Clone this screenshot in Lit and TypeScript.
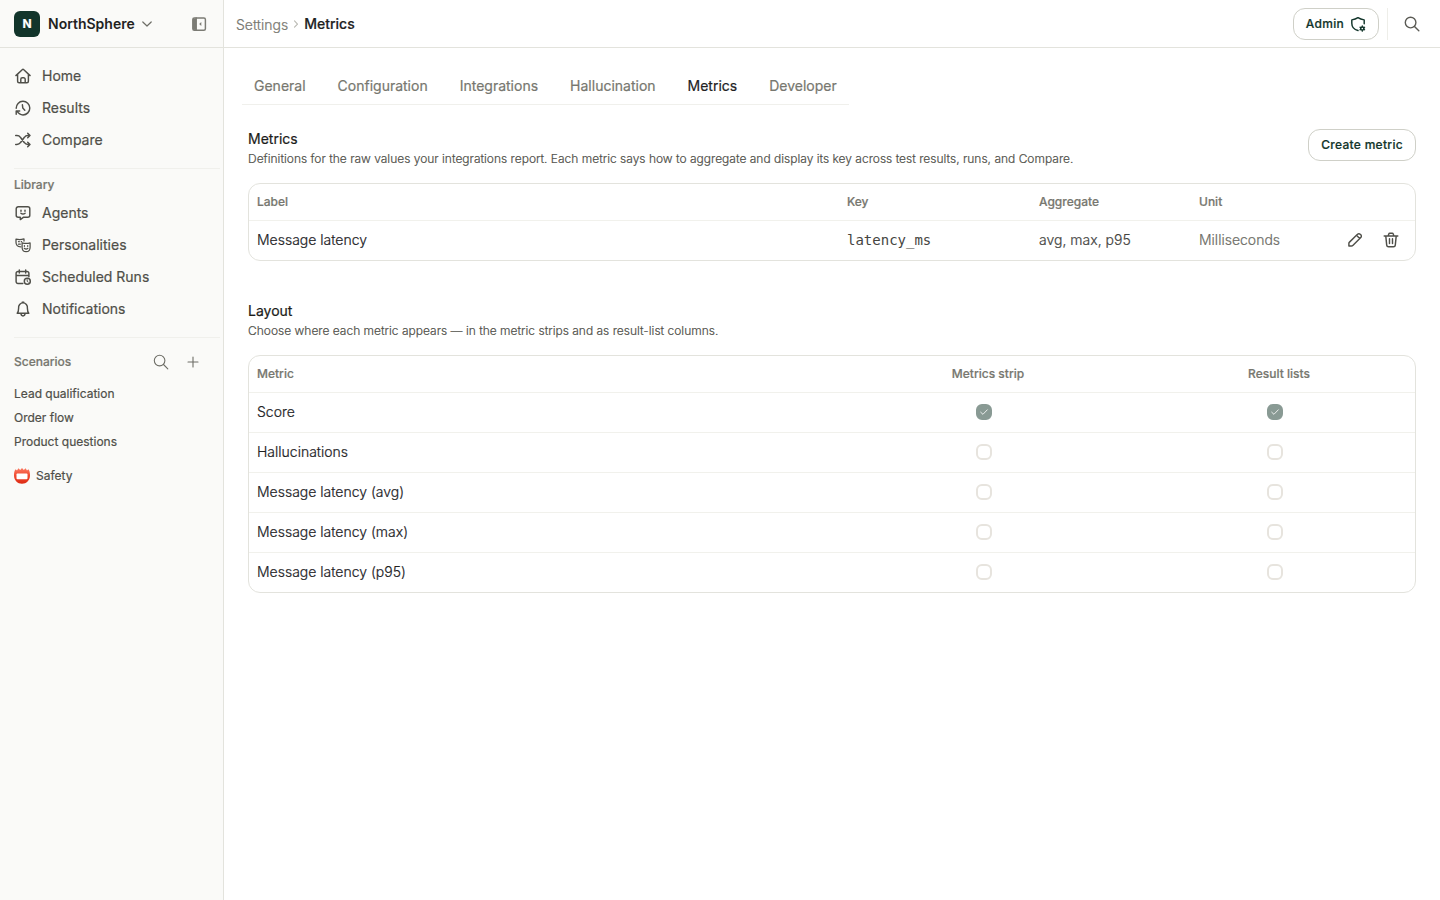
import { LitElement, html, css, svg } from "lit";
import { customElement, property } from "lit/decorators.js";

const ICONS: Record<string, unknown> = {
  home: svg`<path d="M.9 7.6 7.2 1.7a1.2 1.2 0 0 1 1.6 0L15.1 7.6M2.6 6.3v7a1.5 1.5 0 0 0 1.5 1.5h7.8a1.5 1.5 0 0 0 1.5-1.5v-7M5.8 14.6v-3.4a1.5 1.5 0 0 1 1.5-1.5h1.4a1.5 1.5 0 0 1 1.5 1.5v3.4"/>`,
  history: svg`<path d="M1.2 8.300A6.800 6.800 0 1 1 8 14.900c-2.500 0-4.500-1.300-6-3.700M1.200 14.300V11H4.700M7.400 4.800l.4 3.300 2 2.100"/>`,
  shuffle: svg`<path d="M.7 12.500h1.200c1.500 0 2.700-.6 3.500-1.800l4-5.400c.8-1.200 2-1.800 3.500-1.800H15M.7 3.500h1.200c1.500 0 2.700.6 3.500 1.800l4 5.400c.8 1.200 2 1.800 3.500 1.800H15M12.700 1.200 15 3.500l-2.300 2.300M12.700 10.200 15 12.500l-2.300 2.300"/>`,
  agent: svg`<path d="M3.200 1.800h9.600a2 2 0 0 1 2 2v6.500a2 2 0 0 1-2 2H8.300L5.300 14.600v-2.300H3.200a2 2 0 0 1-2-2V3.800a2 2 0 0 1 2-2ZM5.900 8.200q2.100 1.700 4.200 0M6 5.300v.9M10 5.300v.9"/>`,
  masks: svg`<path d="M5.700 9.800C2.600 9.700 1 7.900 1 5.200V2.100q4 1 8-.2v2.200M3.500 4.700h.8M6.200 4.700h.4M3.500 7.200h1.800M7.100 5.900q4 1.100 8 0v4.300c0 2.500-1.500 4.500-4 4.500s-4-2-4-4.500ZM9.400 8.700v.6M12.700 8.700v.6M9.300 11.300q1.800 1.500 3.600 0" stroke-width="1.250"/>`,
  calendar: svg`<path d="M7.800 14.500H3a1.900 1.900 0 0 1-1.900-1.900V4.400A1.900 1.900 0 0 1 3 2.500h9a1.900 1.900 0 0 1 1.900 1.900v3.400M1.200 6.400h12.600M4.300 1v2.900M10.700 1v2.900"/><circle cx="12.300" cy="12.200" r="3"/><path d="M12.200 10.700v1.700l1 .7" stroke-width="1"/>`,
  bell: svg`<path d="M2.200 12.300q1.400-1.500 1.400-5A4.400 4.700 0 0 1 8 1.900a4.400 4.700 0 0 1 4.400 5.400q0 3.500 1.400 5ZM7.200 1.700V1.200h1.600v.5M6 12.600a2 2.300 0 0 0 4 0"/>`,
  search: svg`<circle cx="6.600" cy="6.600" r="5.300"/><path d="m10.500 10.500 4.300 4.300"/>`,
  plus: svg`<path d="M8 3v10M3 8h10"/>`,
  down: svg`<path d="m3.800 6 4.200 4L12.200 6"/>`,
  right: svg`<path d="m6 3.800 4 4.200-4 4.200"/>`,
  panel: svg`<rect x="1.800" y="1.900" width="12.600" height="12.400" rx="1.500"/><path d="M2 2.500h3.300v11.400H2Z" fill="currentColor" stroke="none"/><path d="M5.200 2v12"/><path d="M10.300 6v4L8.200 8Z" fill="currentColor" stroke="none"/>`,
  shield: svg`<path d="M8 14.500C4.200 13.500 1.800 10.600 1.800 7.200V3.900q3.700-.4 6.200-2.200 2.500 1.800 6.200 2.200v3.900"/><circle cx="12.300" cy="12.500" r="1.600" stroke-width="1.500"/><path d="M12.300 9.800v.8M12.300 14.400v.8M10 11.200l.7.400M13.900 13.400l.7.400M10 13.800l.7-.4M13.900 11.600l.7-.4" stroke-width="1.300"/>`,
  pencil: svg`<path d="m9.700 3.100.9-.9a1.800 1.800 0 0 1 2.550 0l.65.650a1.800 1.800 0 0 1 0 2.550l-8 8a1.900 1.900 0 0 1-1.300.6H1.900v-2.600a1.900 1.900 0 0 1 .6-1.300ZM9.500 3.300l3.200 3.200"/>`,
  trash: svg`<path d="M1.200 3.900h13.600M2.800 4.100l.9 9a1.800 1.800 0 0 0 1.800 1.600h5a1.800 1.800 0 0 0 1.800-1.600l.9-9M5.200 3.700l.6-1.800a1 1 0 0 1 1-.7h2.400a1 1 0 0 1 1 .7l.6 1.800M6.500 6.800v4.600M9.500 6.800v4.600"/>`,
  check: svg`<path d="m3.600 8.300 3 2.800 5.800-6"/>`,
};

@customElement("line-icon")
class LineIcon extends LitElement {
  @property() name = "";
  static styles = css`
    :host { display: block; width: 16px; height: 16px; flex: none; }
    svg { display: block; width: 100%; height: 100%; overflow: visible; fill: none; stroke: currentColor;
      stroke-width: var(--stroke, 1.45); stroke-linecap: round; stroke-linejoin: round; }
  `;
  render() {
    return html`<svg viewBox="0 0 16 16" aria-hidden="true">${ICONS[this.name]}</svg>`;
  }
}

const NAV = [["home", "Home"], ["history", "Results"], ["shuffle", "Compare"]];
const LIBRARY = [["agent", "Agents"], ["masks", "Personalities"], ["calendar", "Scheduled Runs"], ["bell", "Notifications"]];
const TABS = ["General", "Configuration", "Integrations", "Hallucination", "Metrics", "Developer"];
const LAYOUT: [string, boolean][] = [
  ["Score", true],
  ["Hallucinations", false],
  ["Message latency (avg)", false],
  ["Message latency (max)", false],
  ["Message latency (p95)", false],
];

@customElement("app-root")
class AppRoot extends LitElement {
  static styles = css`
    :host { display: grid; grid-template-columns: 224px 1fr; height: 100vh; overflow: hidden; background: #fff;
      font: 300 14px/20px Inter, sans-serif; color: #22221f; -webkit-text-stroke: 0.2px; }
    * { box-sizing: border-box; }
    h2, p { margin: 0; }
    button { font: inherit; color: inherit; background: none; border: 0; padding: 0; }
    .side { background: #fafaf8; border-right: 1px solid #e3e3dd; color: #4f4f49; }
    .brand { height: 48px; border-bottom: 1px solid #e3e3dd; display: flex; align-items: center; padding: 0 16px 0 14px; }
    .logo { width: 26px; height: 26px; border-radius: 6px; background: #12352b; color: #fff; display: grid; place-items: center;
      font-weight: 700; font-size: 12px; margin-right: 8px; }
    .name { font-weight: 600; color: #22221f; margin-right: 4px; -webkit-text-stroke: 0; }
    .name + line-icon { color: #6d6d66; --stroke: 1.2; }
    .brand .panel { margin-left: auto; color: #7b7b74; }
    .nav { padding: 12px 4px 0 14px; display: flex; flex-direction: column; }
    .item { height: 32px; display: flex; align-items: center; gap: 11px; padding-left: 1px; font-weight: 400; }
    .rule { height: 1px; background: #f0f0ec; margin: 12px 3px 0 14px; }
    .cap { font-size: 12px; line-height: 16px; font-weight: 500; color: #77776f; }
    .library { padding: 8px 14px 4px; }
    .library + .nav { padding-top: 0; }
    .scen { display: flex; align-items: center; height: 24px; margin-top: 12px; padding: 0 22px 0 14px; color: #6d6d66; }
    .scen .cap { flex: 1; }
    .scen line-icon { --stroke: 1.1; }
    .scen line-icon + line-icon { margin-left: 16px; }
    .list { padding: 8px 14px; font-size: 12px; line-height: 24px; font-weight: 400; display: flex; flex-direction: column; }
    .safety { display: flex; align-items: center; gap: 6px; margin-top: 10px; }
    .badge { width: 16px; height: 16px; display: block; }
    .main { display: flex; flex-direction: column; min-width: 0; }
    .top { height: 48px; border-bottom: 1px solid #e3e3dd; display: flex; align-items: center; padding: 0 20px 0 12px; }
    .crumb { color: #77776f; padding-top: 2px; }
    .sep { color: #b9b9b2; width: 12px; height: 12px; margin: 0 2px; }
    .here { font-weight: 500; color: #22221f; flex: 1; }
    .pill { height: 32px; border: 1px solid #cfd0c8; border-radius: 12px; padding: 0 12px; font-size: 12px; font-weight: 500;
      letter-spacing: 0.3px; color: #12352b; display: flex; align-items: center; gap: 6px; background: #fff; white-space: nowrap; }
    .div { width: 1px; height: 32px; background: #eeeee9; margin: 0 16px 0 8px; }
    .glass { color: #5b5b55; --stroke: 1.4; }
    .tabs { display: flex; gap: 32px; align-self: flex-start; margin: 20px 0 0 18px; padding: 0 12px; height: 37px;
      align-items: center; border-bottom: 1px solid #f0f0ec; font-weight: 400; color: #77776f; }
    .on { color: #22221f; }
    .body { padding: 24px 24px 0; }
    .head { display: flex; justify-content: space-between; align-items: flex-start; height: 54px; }
    h2 { font-size: 14px; line-height: 20px; font-weight: 400; color: #1c1c1a; }
    .sub { font-size: 12px; line-height: 20px; color: #4f4f49; }
    .table { border: 1px solid #e3e3dd; border-radius: 12px; overflow: hidden; }
    .row { display: grid; height: 40px; align-items: center; padding: 0 8px 1px; border-bottom: 1px solid #f1f1ec; }
    .row:last-child { height: 39px; border-bottom: 0; }
    .row.th { height: 37px; padding-bottom: 0; color: #77776f; font-size: 12px; font-weight: 500; }
    .defs .row { grid-template-columns: 590px 192px 160px 148px 1fr; }
    .mono { font: 400 14px/20px "DejaVu Sans Mono", monospace; color: #45453f; -webkit-text-stroke: 0; }
    .agg { color: #45453f; }
    .unit { color: #6d6d66; }
    .acts { display: flex; gap: 20px; color: #4f4f49; }
    .gap { margin-top: 40px; }
    .place .row { grid-template-columns: 576px 310px 1fr; padding-right: 0; }
    .mid { display: flex; justify-content: center; }
    .box { width: 16px; height: 16px; border-radius: 6px; border: 2px solid #e7e4de; margin-right: 8px; }
    .yes { background: #899a94; border-color: #899a94; color: #fff; --stroke: 1.1; }
    .yes line-icon { width: 12px; height: 12px; }
  `;

  box(on: boolean) {
    return html`<div class="mid"><span class="box ${on ? "yes" : ""}">${on ? html`<line-icon name="check"></line-icon>` : ""}</span></div>`;
  }

  items(list: string[][]) {
    return html`<nav class="nav">${list.map(([icon, text]) => html`<div class="item"><line-icon name=${icon}></line-icon>${text}</div>`)}</nav>`;
  }

  render() {
    return html`
      <aside class="side">
        <div class="brand">
          <div class="logo">N</div><span class="name">NorthSphere</span><line-icon name="down"></line-icon>
          <line-icon class="panel" name="panel"></line-icon>
        </div>
        ${this.items(NAV)}
        <div class="rule"></div>
        <div class="cap library">Library</div>
        ${this.items(LIBRARY)}
        <div class="rule"></div>
        <div class="scen"><span class="cap">Scenarios</span><line-icon name="search"></line-icon><line-icon name="plus"></line-icon></div>
        <div class="list">
          <span>Lead qualification</span><span>Order flow</span><span>Product questions</span>
          <span class="safety">
            <svg class="badge" viewBox="0 0 16 16">
              <defs><linearGradient id="red" x1="0" y1="0" x2="0" y2="1"><stop offset="0" stop-color="#fb7a62"/><stop offset=".5" stop-color="#f04a30"/><stop offset="1" stop-color="#dc2a14"/></linearGradient></defs>
              <path fill="url(#red)" d="M1.600 1.200 3 2.600 4.400.300 6.200 2 8 0l1.800 2L11.600.300 13 2.600l1.400-1.400c1.200 1.700 1.700 3.800 1.600 6.500-.2 4.700-3.500 8-8 8S.2 12.400 0 7.700C-.1 5 .4 2.900 1.600 1.200Z"/>
              <rect x="2.500" y="5.500" width="11" height="5.700" rx=".9" fill="#fff"/>
            </svg>Safety</span>
        </div>
      </aside>
      <main class="main">
        <header class="top">
          <span class="crumb">Settings</span><line-icon class="sep" name="right"></line-icon><span class="here">Metrics</span>
          <button class="pill">Admin<line-icon name="shield"></line-icon></button>
          <div class="div"></div><line-icon class="glass" name="search"></line-icon>
        </header>
        <div class="tabs">${TABS.map((t) => html`<span class=${t === "Metrics" ? "on" : ""}>${t}</span>`)}</div>
        <div class="body">
          <div class="head">
            <div><h2>Metrics</h2><p class="sub">Definitions for the raw values your integrations report. Each metric says how to aggregate and display its key across test results, runs, and Compare.</p></div>
            <button class="pill">Create metric</button>
          </div>
          <div class="table defs">
            <div class="row th"><span>Label</span><span>Key</span><span>Aggregate</span><span>Unit</span></div>
            <div class="row"><span>Message latency</span><span class="mono">latency_ms</span><span class="agg">avg, max, p95</span><span class="unit">Milliseconds</span>
              <span class="acts"><line-icon name="pencil"></line-icon><line-icon name="trash"></line-icon></span></div>
          </div>
          <div class="head gap"><div><h2>Layout</h2><p class="sub">Choose where each metric appears — in the metric strips and as result-list columns.</p></div></div>
          <div class="table place">
            <div class="row th"><span>Metric</span><span class="mid">Metrics strip</span><span class="mid">Result lists</span></div>
            ${LAYOUT.map(([name, on]) => html`<div class="row"><span>${name}</span>${this.box(on)}${this.box(on)}</div>`)}
          </div>
        </div>
      </main>`;
  }
}
